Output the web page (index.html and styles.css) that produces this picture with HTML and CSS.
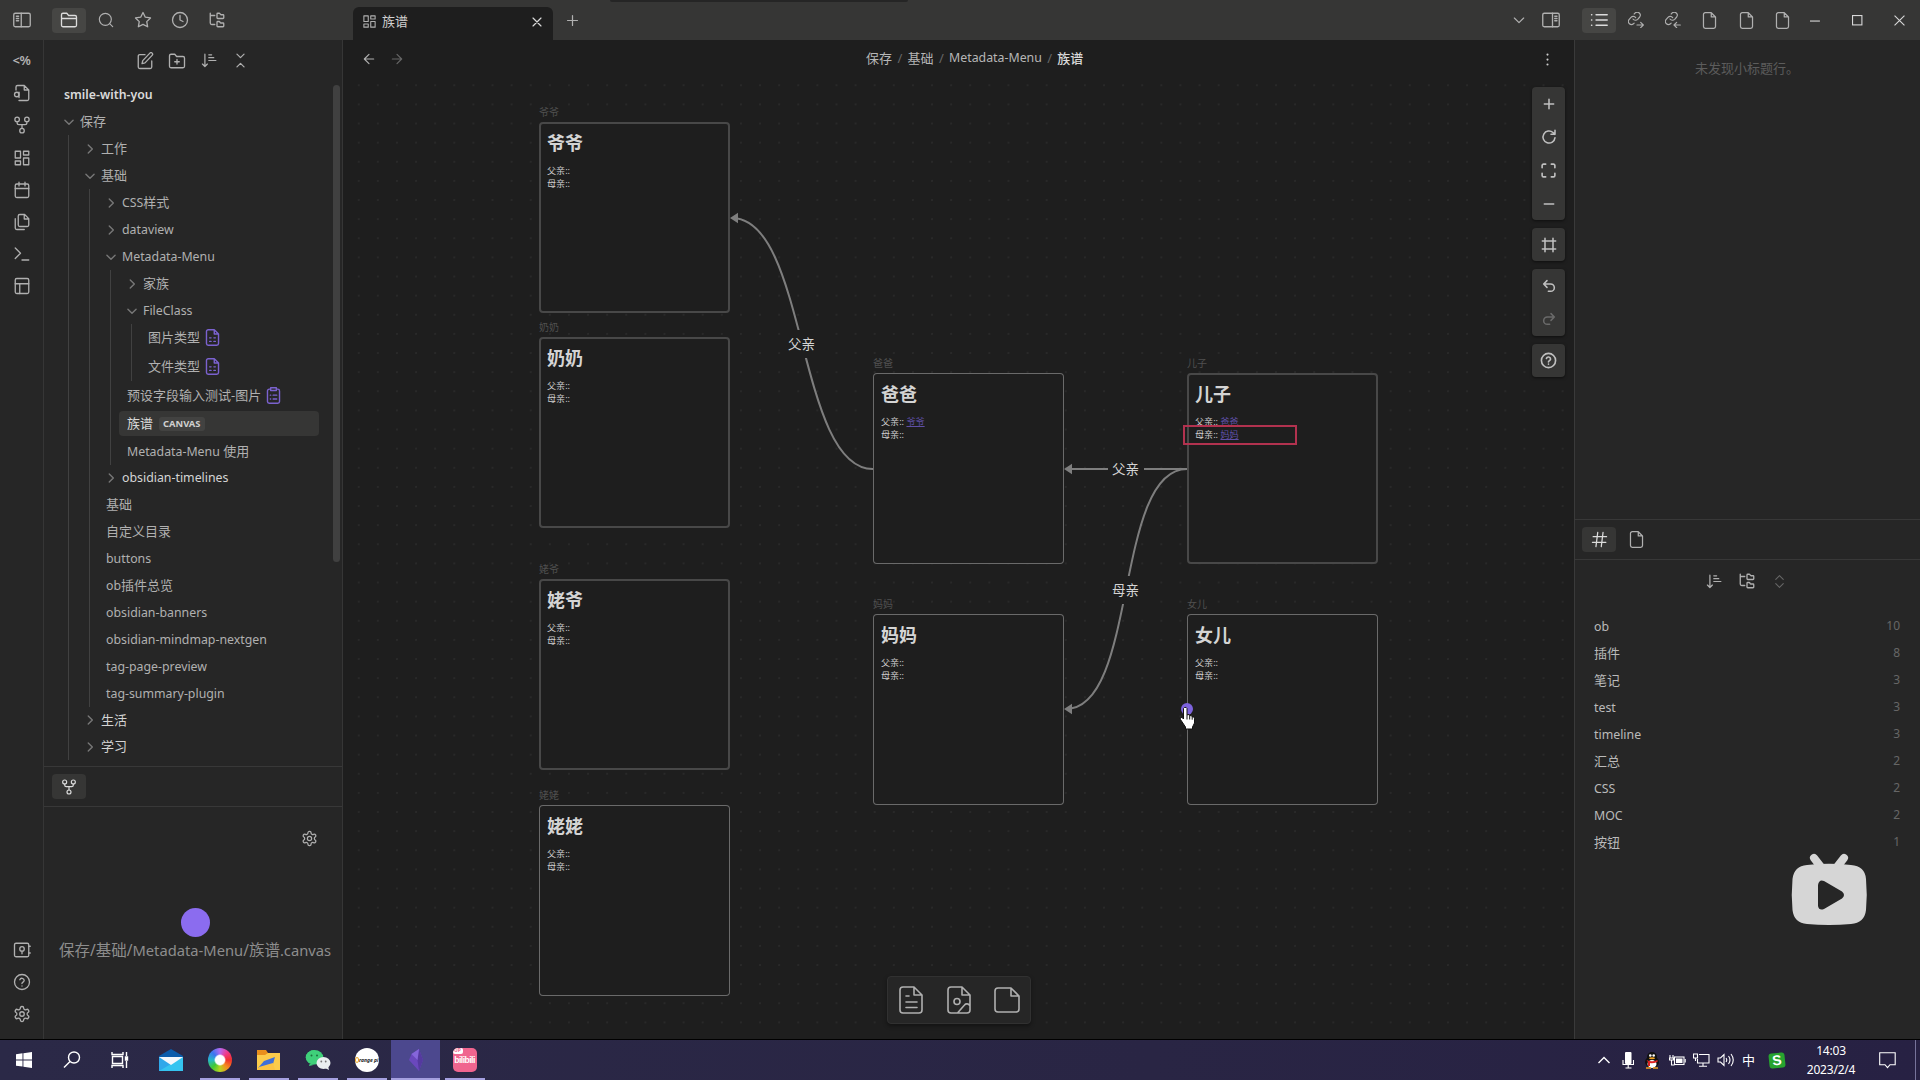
FILE: index.html
```html
<!DOCTYPE html>
<html lang="zh-CN">
<head>
<meta charset="utf-8">
<title>族谱</title>
<link rel="stylesheet" href="styles.css">
</head>
<body>
<svg class="defs" aria-hidden="true">
  <symbol id="i-folder" viewBox="0 0 24 24"><path d="M2 9V5a2 2 0 0 1 2-2h5l2.500 3H20a2 2 0 0 1 2 2v11a2 2 0 0 1-2 2H4a2 2 0 0 1-2-2V10h20"/></symbol>
  <symbol id="i-search" viewBox="0 0 24 24"><circle cx="11" cy="11" r="9"/><path d="M17.500 17.500L22 22"/></symbol>
  <symbol id="i-star" viewBox="0 0 24 24"><path d="M12 2l3.090 6.260L22 9.270l-5 4.870 1.180 6.880L12 17.770l-6.180 3.250L7 14.140 2 9.270l6.910-1.010z"/></symbol>
  <symbol id="i-clock" viewBox="0 0 24 24"><circle cx="12" cy="12" r="10"/><path d="M12 6v6l4 2"/></symbol>
  <symbol id="i-tree" viewBox="0 0 24 24"><path d="M13 10h7a1 1 0 0 0 1-1V6a1 1 0 0 0-1-1h-2.500a1 1 0 0 1-.8-.4l-.9-1.200A1 1 0 0 0 15 3h-2a1 1 0 0 0-1 1v5a1 1 0 0 0 1 1zM13 21h7a1 1 0 0 0 1-1v-3a1 1 0 0 0-1-1h-2.880a1 1 0 0 1-.9-.55l-.44-.9a1 1 0 0 0-.9-.55H13a1 1 0 0 0-1 1v5a1 1 0 0 0 1 1zM3 3v13a2 2 0 0 0 2 2h4M3 6h6"/></symbol>
  <symbol id="i-grid" viewBox="0 0 24 24"><path d="M3 3h7v9H3zM14 3h7v5h-7zM14 12h7v9h-7zM3 16h7v5H3z"/></symbol>
  <symbol id="i-x" viewBox="0 0 24 24"><path d="M18 6L6 18M6 6l12 12"/></symbol>
  <symbol id="i-plus" viewBox="0 0 24 24"><path d="M12 5v14M5 12h14"/></symbol>
  <symbol id="i-minus" viewBox="0 0 24 24"><path d="M5 12h14"/></symbol>
  <symbol id="i-left" viewBox="0 0 24 24"><path d="M19 12H5M12 19l-7-7 7-7"/></symbol>
  <symbol id="i-right" viewBox="0 0 24 24"><path d="M5 12h14M12 5l7 7-7 7"/></symbol>
  <symbol id="i-down" viewBox="0 0 24 24"><path d="M5 9l7 7 7-7"/></symbol>
  <symbol id="i-next" viewBox="0 0 24 24"><path d="M9 5l7 7-7 7"/></symbol>
  <symbol id="i-panel-l" viewBox="0 0 24 24"><rect x="1" y="3" width="22" height="18" rx="2"/><path d="M11 3v18M4.500 7h3M4.500 10h3M4.500 13h3"/></symbol>
  <symbol id="i-panel-r" viewBox="0 0 24 24"><rect x="1" y="3" width="22" height="18" rx="2"/><path d="M14 3v18M17 7h3M17 10h3M17 13h3"/></symbol>
  <symbol id="i-edit" viewBox="0 0 24 24"><path d="M12 3.500H5a2 2 0 0 0-2 2V20a2 2 0 0 0 2 2h14a2 2 0 0 0 2-2v-8M18.500 1.500a2.100 2.100 0 0 1 3 3L12 14.500l-4 1 1-4z"/></symbol>
  <symbol id="i-newfolder" viewBox="0 0 24 24"><path d="M4 21a2 2 0 0 1-2-2V5a2 2 0 0 1 2-2h5l2.500 3H20a2 2 0 0 1 2 2v11a2 2 0 0 1-2 2zM12 10v6M9 13h6"/></symbol>
  <symbol id="i-sort" viewBox="0 0 24 24"><path d="M2 17l3.500 3.500L9 17M5.500 20V3M11 4h4M11 8h7M11 12h10"/></symbol>
  <symbol id="i-collapse" viewBox="0 0 24 24"><path d="M7 21l5-5 5 5M7 3l5 5 5-5"/></symbol>
  <symbol id="i-updown" viewBox="0 0 24 24"><path d="M6 15.500l6 6 6-6M6 8.500l6-6 6 6"/></symbol>
  <symbol id="i-filesearch" viewBox="0 0 24 24"><path d="M4 8V4a2 2 0 0 1 2-2h9l6 6v12a2 2 0 0 1-2 2H8M15 2v6h6"/><circle cx="5" cy="14" r="3"/><path d="M8 11v7"/></symbol>
  <symbol id="i-fork" viewBox="0 0 24 24"><circle cx="12" cy="19.500" r="3"/><circle cx="5.500" cy="4.500" r="3"/><circle cx="18.500" cy="4.500" r="3"/><path d="M18.500 7.500v1.500a2.500 2.500 0 0 1-2.500 2.500H8A2.500 2.500 0 0 1 5.500 9V7.500M12 11.500v5"/></symbol>
  <symbol id="i-cal" viewBox="0 0 24 24"><rect x="3" y="4" width="18" height="18" rx="2"/><path d="M16 1.500v5M8 1.500v5M3 10h18"/></symbol>
  <symbol id="i-copy" viewBox="0 0 24 24"><path d="M15.500 2H9a2 2 0 0 0-2 2v12a2 2 0 0 0 2 2h10a2 2 0 0 0 2-2V7.500zM15 2v6h6M3 7.600V20a2 2 0 0 0 2 2h10"/></symbol>
  <symbol id="i-term" viewBox="0 0 24 24"><path d="M3 18l7-7-7-7M12 20h9"/></symbol>
  <symbol id="i-layout" viewBox="0 0 24 24"><rect x="3" y="2" width="18" height="20" rx="2"/><path d="M3 9h18M9 22V9"/></symbol>
  <symbol id="i-vault" viewBox="0 0 24 24"><rect x="2" y="3" width="19" height="18" rx="2"/><circle cx="12" cy="10.500" r="3"/><path d="M12 13.500V17M21 7h2M21 16h2"/></symbol>
  <symbol id="i-help" viewBox="0 0 24 24"><circle cx="12" cy="12" r="10"/><path d="M9.100 9a3 3 0 0 1 5.820 1c0 2-3 2.300-3 4M12 17.200v.1"/></symbol>
  <symbol id="i-gear" viewBox="0 0 24 24"><path d="M12.220 2h-.44a2 2 0 0 0-2 2v.18a2 2 0 0 1-1 1.730l-.43.25a2 2 0 0 1-2 0l-.15-.08a2 2 0 0 0-2.730.73l-.22.38a2 2 0 0 0 .73 2.730l.15.1a2 2 0 0 1 1 1.720v.51a2 2 0 0 1-1 1.740l-.15.09a2 2 0 0 0-.73 2.730l.22.38a2 2 0 0 0 2.730.73l.15-.08a2 2 0 0 1 2 0l.43.25a2 2 0 0 1 1 1.730V20a2 2 0 0 0 2 2h.44a2 2 0 0 0 2-2v-.18a2 2 0 0 1 1-1.730l.43-.25a2 2 0 0 1 2 0l.15.08a2 2 0 0 0 2.730-.73l.22-.39a2 2 0 0 0-.73-2.730l-.15-.08a2 2 0 0 1-1-1.740v-.5a2 2 0 0 1 1-1.740l.15-.09a2 2 0 0 0 .73-2.730l-.22-.38a2 2 0 0 0-2.730-.73l-.15.08a2 2 0 0 1-2 0l-.43-.25a2 2 0 0 1-1-1.730V4a2 2 0 0 0-2-2z"/><circle cx="12" cy="12" r="3"/></symbol>
  <symbol id="i-list" viewBox="0 0 24 24"><path d="M8 5h15M8 12h15M8 19h15M2 5h.5M2 12h.5M2 19h.5"/></symbol>
  <symbol id="i-link-out" viewBox="0 0 24 24"><path d="M7.500 10.500a4.600 4.600 0 0 0 7 .5l3-3.500a4.600 4.600 0 0 0-6.700-6.200L9.300 3M11.500 8.500a4.600 4.600 0 0 0-7-.5l-3 3.500a4.600 4.600 0 0 0 6.700 6.200l1-1M13.500 19.500h9M19 15.500l4 4-4 4"/></symbol>
  <symbol id="i-link-in" viewBox="0 0 24 24"><path d="M7.500 10.500a4.600 4.600 0 0 0 7 .5l3-3.500a4.600 4.600 0 0 0-6.700-6.200L9.300 3M11.500 8.500a4.600 4.600 0 0 0-7-.5l-3 3.500a4.600 4.600 0 0 0 6.700 6.200l1-1M14 19.500h9M17.500 15.500l-4 4 4 4"/></symbol>
  <symbol id="i-file" viewBox="0 0 24 24"><path d="M14.500 1H6a2.500 2.500 0 0 0-2.500 2.500v17A2.500 2.500 0 0 0 6 23h12a2.500 2.500 0 0 0 2.500-2.500V7zM14.500 1v6h6"/></symbol>
  <symbol id="i-filespread" viewBox="0 0 24 24"><path d="M14.500 1H6a2.500 2.500 0 0 0-2.500 2.500v17A2.500 2.500 0 0 0 6 23h12a2.500 2.500 0 0 0 2.500-2.500V7zM14.500 1v6h6M8 12.500h2M14 12.500h2M8 17.500h2M14 17.500h2"/></symbol>
  <symbol id="i-clip" viewBox="0 0 24 24"><path d="M8 3H6a2.500 2.500 0 0 0-2.500 2.500v15A2.500 2.500 0 0 0 6 23h12a2.500 2.500 0 0 0 2.500-2.500v-15A2.500 2.500 0 0 0 18 3h-2M8 1h8v4H8zM11.500 11.500h5M11.500 17h5M7.500 11.500h.5M7.500 17h.5"/></symbol>
  <symbol id="i-dots" viewBox="0 0 24 24"><path d="M12 5v.1M12 12v.1M12 19v.1"/></symbol>
  <symbol id="i-rotate" viewBox="0 0 24 24"><path d="M21 2v6h-6M21 13a9 9 0 1 1-3-7.700L21 8"/></symbol>
  <symbol id="i-max" viewBox="0 0 24 24"><path d="M8 3H5a2 2 0 0 0-2 2v3M21 8V5a2 2 0 0 0-2-2h-3M3 16v3a2 2 0 0 0 2 2h3M16 21h3a2 2 0 0 0 2-2v-3"/></symbol>
  <symbol id="i-frame" viewBox="0 0 24 24"><path d="M22 6H2M22 18H2M6 2v20M18 2v20"/></symbol>
  <symbol id="i-undo" viewBox="0 0 24 24"><path d="M9 14L4 9l5-5M4 9h10.500a5.500 5.500 0 0 1 0 11H11"/></symbol>
  <symbol id="i-redo" viewBox="0 0 24 24"><path d="M15 14l5-5-5-5M20 9H9.500a5.500 5.500 0 0 0 0 11H13"/></symbol>
  <symbol id="i-hash" viewBox="0 0 24 24"><path d="M3 8h19M2 16h19M9.500 2L7 22M17 2l-2.500 20"/></symbol>
  <symbol id="i-doc" viewBox="0 0 28 28"><path d="M17 1H6a3 3 0 0 0-3 3v20a3 3 0 0 0 3 3h16a3 3 0 0 0 3-3V9zM17 1v8h8M9 10h3M9 16h11M9 21.500h11"/></symbol>
  <symbol id="i-image" viewBox="0 0 28 28"><path d="M17 1H6a3 3 0 0 0-3 3v20a3 3 0 0 0 3 3h16a3 3 0 0 0 3-3V9zM17 1v8h8M12.500 27l7-8a3 3 0 0 1 5 .5"/><circle cx="12" cy="15.500" r="3"/></symbol>
  <symbol id="i-note" viewBox="0 0 28 28"><path d="M18 2H5a3 3 0 0 0-3 3v18a3 3 0 0 0 3 3h18a3 3 0 0 0 3-3V10zM18 2v8h8"/></symbol>
</svg>

<div class="app">
  <header class="titlebar">
    <div class="tb-left">
      <svg class="ic i18 tb-toggle"><use href="#i-panel-l"/></svg>
      <div class="tabs-mini">
        <span class="chip active"><svg class="ic i18"><use href="#i-folder"/></svg></span>
        <span class="chip"><svg class="ic i16"><use href="#i-search"/></svg></span>
        <span class="chip"><svg class="ic i18"><use href="#i-star"/></svg></span>
        <span class="chip"><svg class="ic i18"><use href="#i-clock"/></svg></span>
        <span class="chip"><svg class="ic i18"><use href="#i-tree"/></svg></span>
      </div>
    </div>
    <div class="tb-center">
      <div class="tab"><svg class="ic i15"><use href="#i-grid"/></svg><span class="tab-name">族谱</span><svg class="ic i16 bright"><use href="#i-x"/></svg></div>
      <svg class="ic i17 tab-add"><use href="#i-plus"/></svg>
      <svg class="ic i16 tab-menu"><use href="#i-down"/></svg>
      <svg class="ic i18 tab-panel"><use href="#i-panel-r"/></svg>
    </div>
    <div class="tb-right">
      <span class="chip active"><svg class="ic i18"><use href="#i-list"/></svg></span>
      <span class="chip"><svg class="ic i16"><use href="#i-link-out"/></svg></span>
      <span class="chip"><svg class="ic i16"><use href="#i-link-in"/></svg></span>
      <span class="chip"><svg class="ic i17"><use href="#i-file"/></svg></span>
      <span class="chip"><svg class="ic i17"><use href="#i-file"/></svg></span>
      <span class="chip"><svg class="ic i17"><use href="#i-file"/></svg></span>
      <div class="winbtns">
        <svg viewBox="0 0 10 10"><path d="M0 5.500h9"/></svg>
        <svg viewBox="0 0 10 10"><rect x=".5" y=".5" width="8.500" height="8.500"/></svg>
        <svg viewBox="0 0 10 10"><path d="M.5.5l9 9M9.500.5l-9 9"/></svg>
      </div>
    </div>
    <div class="top-shade"></div>
  </header>

  <div class="body">
    <nav class="ribbon">
      <span class="templ">&lt;%</span>
      <svg class="ic i18"><use href="#i-filesearch"/></svg>
      <svg class="ic i18"><use href="#i-fork"/></svg>
      <svg class="ic i18"><use href="#i-grid"/></svg>
      <svg class="ic i18"><use href="#i-cal"/></svg>
      <svg class="ic i18"><use href="#i-copy"/></svg>
      <svg class="ic i18"><use href="#i-term"/></svg>
      <svg class="ic i18"><use href="#i-layout"/></svg>
      <span class="grow"></span>
      <svg class="ic i18"><use href="#i-vault"/></svg>
      <svg class="ic i18"><use href="#i-help"/></svg>
      <svg class="ic i18"><use href="#i-gear"/></svg>
    </nav>

    <aside class="sidebar">
      <section class="explorer">
        <div class="actions">
          <svg class="ic i18"><use href="#i-edit"/></svg>
          <svg class="ic i18"><use href="#i-newfolder"/></svg>
          <svg class="ic i17"><use href="#i-sort"/></svg>
          <svg class="ic i17"><use href="#i-collapse"/></svg>
        </div>
        <div class="tree">
          <div class="row file vault en">smile-with-you</div>
          <div class="row"><svg class="chev"><use href="#i-down"/></svg>保存</div>
          <div class="kids">
            <div class="row"><svg class="chev"><use href="#i-next"/></svg>工作</div>
            <div class="row"><svg class="chev"><use href="#i-down"/></svg>基础</div>
            <div class="kids">
              <div class="row"><svg class="chev"><use href="#i-next"/></svg><span class="en">CSS</span>样式</div>
              <div class="row"><svg class="chev"><use href="#i-next"/></svg><span class="en">dataview</span></div>
              <div class="row"><svg class="chev"><use href="#i-down"/></svg><span class="en">Metadata-Menu</span></div>
              <div class="kids">
                <div class="row"><svg class="chev"><use href="#i-next"/></svg>家族</div>
                <div class="row"><svg class="chev"><use href="#i-down"/></svg><span class="en">FileClass</span></div>
                <div class="kids">
                  <div class="row file r27">图片类型<svg class="ic i17 tag-ic"><use href="#i-filespread"/></svg></div>
                  <div class="row file r30">文件类型<svg class="ic i17 tag-ic"><use href="#i-filespread"/></svg></div>
                </div>
                <div class="row file r28">预设字段输入测试-图片<svg class="ic i17 tag-ic"><use href="#i-clip"/></svg></div>
                <div class="row file r29"><div class="selected">族谱<span class="badge">CANVAS</span></div></div>
                <div class="row file"><span class="en">Metadata-Menu</span>&nbsp;使用</div>
              </div>
              <div class="row r26 lit"><svg class="chev"><use href="#i-next"/></svg><span class="en">obsidian-timelines</span></div>
              <div class="row file">基础</div>
              <div class="row file">自定义目录</div>
              <div class="row file"><span class="en">buttons</span></div>
              <div class="row file"><span class="en">ob</span>插件总览</div>
              <div class="row file"><span class="en">obsidian-banners</span></div>
              <div class="row file"><span class="en">obsidian-mindmap-nextgen</span></div>
              <div class="row file"><span class="en">tag-page-preview</span></div>
              <div class="row file"><span class="en">tag-summary-plugin</span></div>
            </div>
            <div class="row lit r26"><svg class="chev"><use href="#i-next"/></svg>生活</div>
            <div class="row lit"><svg class="chev"><use href="#i-next"/></svg>学习</div>
          </div>
        </div>
        <div class="scrollbar"></div>
      </section>
      <div class="pane-tabs"><span class="chip active"><svg class="ic i16"><use href="#i-fork"/></svg></span></div>
      <section class="graph">
        <svg class="ic i17 graph-gear"><use href="#i-gear"/></svg>
        <div class="graph-node"></div>
        <div class="graph-label">保存/基础/<span class="en">Metadata-Menu</span>/族谱<span class="en">.canvas</span></div>
      </section>
    </aside>

    <main class="main">
      <div class="view-head">
        <svg class="ic i16"><use href="#i-left"/></svg>
        <svg class="ic i16 dim"><use href="#i-right"/></svg>
        <div class="crumbs"><span>保存</span><i>/</i><span>基础</span><i>/</i><span class="en">Metadata-Menu</span><i>/</i><b>族谱</b></div>
        <svg class="ic i17 more"><use href="#i-dots"/></svg>
      </div>
      <div class="canvas">
        <div class="dots"></div>
        <svg class="edges" viewBox="343 78 1230 961">
          <path d="M873 469C797 469 807 218 732 218"/>
          <path d="M1187 469H1070"/>
          <path d="M1187 469C1114 469 1138 709 1066 709"/>
          <g class="heads"><path d="M730 218l8-5.300v10.600zM1064 469l8-5.300v10.600zM1064 709l8-5.300v10.600z"/></g>
        </svg>
        <span class="edge-label e1">父亲</span>
        <span class="edge-label e2">父亲</span>
        <span class="edge-label e3">母亲</span>

        <article class="node soft n1"><label>爷爷</label><h2>爷爷</h2><p>父亲::</p><p>母亲::</p></article>
        <article class="node soft n2"><label>奶奶</label><h2>奶奶</h2><p>父亲::</p><p>母亲::</p></article>
        <article class="node soft n3"><label>姥爷</label><h2>姥爷</h2><p>父亲::</p><p>母亲::</p></article>
        <article class="node n4"><label>姥姥</label><h2>姥姥</h2><p>父亲::</p><p>母亲::</p></article>
        <article class="node n5"><label>爸爸</label><h2>爸爸</h2><p>父亲:: <a>爷爷</a></p><p>母亲::</p></article>
        <article class="node n6"><label>妈妈</label><h2>妈妈</h2><p>父亲::</p><p>母亲::</p></article>
        <article class="node soft n7"><label>儿子</label><h2>儿子</h2><p>父亲:: <a>爸爸</a></p><p>母亲:: <a>妈妈</a></p></article>
        <article class="node n8"><label>女儿</label><h2>女儿</h2><p>父亲::</p><p>母亲::</p></article>

        <div class="redbox"></div>
        <div class="handle"></div>
        <svg class="cursor" viewBox="0 0 17 24"><path d="M5.500 1.500Q7.500.8 8 2.500V9l1-.5q1.500 0 1.700 1.200 2-.6 2.300 1 2.200-.4 2.500 1.500V17l-2 4v2H6.500v-2L1.500 13.500Q.5 11.500 2 11.200q1.200 0 2.500 1.800V2.500z"/><path class="fingers" d="M8 9v4.500M10.700 9.700v3.800M13.200 10.700v3"/></svg>

        <div class="controls">
          <div class="cgroup">
            <span><svg class="ic i16"><use href="#i-plus"/></svg></span>
            <span><svg class="ic i16"><use href="#i-rotate"/></svg></span>
            <span><svg class="ic i17"><use href="#i-max"/></svg></span>
            <span><svg class="ic i16"><use href="#i-minus"/></svg></span>
          </div>
          <div class="cgroup"><span><svg class="ic i16"><use href="#i-frame"/></svg></span></div>
          <div class="cgroup">
            <span><svg class="ic i16"><use href="#i-undo"/></svg></span>
            <span><svg class="ic i16 dim"><use href="#i-redo"/></svg></span>
          </div>
          <div class="cgroup"><span><svg class="ic i17"><use href="#i-help"/></svg></span></div>
        </div>

        <div class="cardmenu">
          <svg class="ic i28"><use href="#i-doc"/></svg>
          <svg class="ic i28"><use href="#i-image"/></svg>
          <svg class="ic i28"><use href="#i-note"/></svg>
        </div>
      </div>
    </main>

    <aside class="rightbar">
      <section class="outline">未发现小标题行。</section>
      <div class="pane-tabs">
        <span class="chip active"><svg class="ic i17"><use href="#i-hash"/></svg></span>
        <span class="chip"><svg class="ic i17"><use href="#i-file"/></svg></span>
      </div>
      <section class="tags">
        <div class="tag-actions">
          <svg class="ic i17"><use href="#i-sort"/></svg>
          <svg class="ic i18"><use href="#i-tree"/></svg>
          <svg class="ic i15 dim"><use href="#i-updown"/></svg>
        </div>
        <ul>
          <li><span class="en">ob</span><em>10</em></li>
          <li>插件<em>8</em></li>
          <li>笔记<em>3</em></li>
          <li><span class="en">test</span><em>3</em></li>
          <li><span class="en">timeline</span><em>3</em></li>
          <li>汇总<em>2</em></li>
          <li><span class="en">CSS</span><em>2</em></li>
          <li><span class="en">MOC</span><em>2</em></li>
          <li>按钮<em>1</em></li>
        </ul>
      </section>
      <svg class="bili" viewBox="0 0 76 72"><path d="M23 5l7 9M53 5l-7 9" class="ant"/><path fill-rule="evenodd" d="M16 12Q38 9.500 60 12 74 13 75 26 76.500 42 75 57 73.500 70 60 71 38 73 16 71 3 70 1.500 57 0 42 1.500 26 3 13 16 12zM27 32V53Q28 58 33 56L51 45.500Q55 42 51 38.500L33 28Q28 26 27 32z"/></svg>
    </aside>
  </div>

  <footer class="taskbar">
    <div class="tk"><svg width="16" height="16" viewBox="0 0 16 16" fill="#fff"><path d="M0 2.200L6.500 1.300v6.200H0zM7.400 1.200L16 0v7.500H7.400zM0 8.400h6.500v6.200L0 13.700zM7.400 8.400H16V16l-8.600-1.200z"/></svg></div>
    <div class="tk"><svg width="18" height="18" viewBox="0 0 18 18" class="wl"><circle cx="11" cy="6.500" r="5.500"/><path d="M7 10.500L1 16.500"/></svg></div>
    <div class="tk"><svg width="18" height="18" viewBox="0 0 18 18" class="wl"><path d="M1 1v2.500h11V1M1 17v-2.500h11V17M1.500 5.500h10v7h-10zM15.500 1v4M15.500 10v7"/><path d="M14.500 6h2v3h-2z" fill="#fff"/></svg></div>
    <div class="tk"><svg width="26" height="24" viewBox="0 0 26 24"><path d="M1 8L13 1l12 7v4H1z" fill="#0b5cab"/><path d="M1 9h24v14H1z" fill="#2fa8ea"/><path d="M1 23L25 9v14z" fill="#35c4f0"/><path d="M1 9h24l-12 8z" fill="#f4f8fc"/></svg></div>
    <div class="tk run"><span class="wheel"></span></div>
    <div class="tk run"><svg width="25" height="24" viewBox="0 0 25 24"><path d="M1 2h9l2 3h12v6H1z" fill="#e98f1c"/><path d="M1 7h8l3-2h12v17H1z" fill="#fccb4b"/><path d="M2 20l6-7 11-4-2 7z" fill="#3f6fd8"/><path d="M1 22l2-3 14-4 2 7z" fill="#fcc344"/></svg></div>
    <div class="tk run"><svg width="26" height="22" viewBox="0 0 26 22"><path d="M9.500 1a8.500 7.300 0 1 0 0 14.700L4 17l1-3" fill="#3fd07a"/><ellipse cx="9.500" cy="8.300" rx="8.800" ry="7.300" fill="#3fd07a"/><circle cx="6.500" cy="6.500" r="1" fill="#1f6e3e"/><circle cx="12" cy="6.500" r="1" fill="#1f6e3e"/><ellipse cx="18.500" cy="14" rx="7" ry="6" fill="#e9eef0"/><path d="M20 19l4 2-1-4z" fill="#e9eef0"/><circle cx="16.300" cy="12.500" r=".9" fill="#777"/><circle cx="20.700" cy="12.500" r=".9" fill="#777"/></svg></div>
    <div class="tk run"><span class="orange"><i></i>range pi</span></div>
    <div class="tk run cur"><svg width="16" height="24" viewBox="0 0 16 24"><path d="M11 1L3.500 6 1 12l10 11 4-11z" fill="#6a48bd"/><path d="M11 1l-1.500 11L11 23l4-11z" fill="#553a9f"/><path d="M11 1L3.500 6l6 6z" fill="#8566da"/></svg></div>
    <div class="tk run"><span class="bl"><small>UP</small><b>bilibili</b></span></div>
    <div class="tray">
      <svg class="wl t1" viewBox="0 0 12 8"><path d="M.5 7L6 1.500 11.500 7"/></svg>
      <svg class="t2" viewBox="0 0 12 17"><rect x="3" y="0" width="6.500" height="12" rx="1" fill="#fff"/><path class="wh" d="M1 8v4.500h10.500V8M6.200 12v4M3.500 16h6"/></svg>
      <svg class="t3" viewBox="0 0 16 17"><ellipse cx="8" cy="10" rx="7" ry="6" fill="#111"/><ellipse cx="8" cy="5" rx="5" ry="5" fill="#111"/><ellipse cx="8" cy="12" rx="4.500" ry="4" fill="#fff"/><circle cx="6.300" cy="3.500" r="1.300" fill="#fff"/><circle cx="9.700" cy="3.500" r="1.300" fill="#fff"/><ellipse cx="8" cy="6.200" rx="3" ry="1" fill="#f0a020"/><path d="M2.500 8Q8 10.500 13.500 8v2Q8 12 6 11v3H4v-4z" fill="#d22"/><path d="M2 16h5M9 16h5" stroke="#f0a020" stroke-width="1.500"/></svg>
      <svg class="t4" viewBox="0 0 17 12"><rect x="5.500" y="3" width="9.500" height="7.500" class="wh"/><rect x="7" y="4.500" width="6.500" height="4.500" fill="#fff"/><path class="wh" d="M16.200 5v3.500M1 1v3M4 1v3M.5 4h4v2h-4zM2.500 6v5h3"/></svg>
      <svg class="t5" viewBox="0 0 17 14"><path class="wh" d="M6 1.500h10v8.500H4.500V6M10 10v3M6 13.200h8M.5 1h4v4h-4zM2.500 5v3"/></svg>
      <svg class="t6" viewBox="0 0 17 14"><path class="wh" d="M1 5h2.500L7 1.500v11L3.500 9H1zM9 5q1.500 2 0 4M11.500 3q3 4 0 8M14 1q4.500 6 0 12"/></svg>
      <span class="ime">中</span>
      <span class="sogou">S</span>
      <div class="clock"><span>14:03</span><span>2023/2/4</span></div>
      <svg class="t7" viewBox="0 0 17 17"><path class="wh" d="M.7.700h15.500v12H11l-2.500 3-2.500-3H.7z"/></svg>
      <span class="peek"></span>
    </div>
  </footer>
</div>
</body>
</html>
```
FILE: styles.css
```css
* { box-sizing: border-box; margin: 0; padding: 0; }
body {
  width: 1920px; height: 1080px; overflow: hidden;
  background: #1e1e1e; color: #b6b6b6;
  font: 13px/1.4 "Noto Sans", "Noto Sans CJK SC", sans-serif;
}
.defs { display: none; }
.app { display: flex; flex-direction: column; width: 1920px; height: 1080px; }
.en { font-size: .95em; }
.ic { flex: none; fill: none; stroke: #b0b0b0; stroke-width: 1.75; stroke-linecap: round; stroke-linejoin: round; }
.i15 { width: 15px; height: 15px; }
.i16 { width: 16px; height: 16px; }
.i17 { width: 17px; height: 17px; }
.i18 { width: 18px; height: 18px; }
.i28 { width: 28px; height: 28px; stroke-width: 1.6; }
.ic.dim { stroke: #666; }
.ic.bright { stroke: #dadada; }
.grow { flex: 1; }
.chip { display: flex; align-items: center; justify-content: center; width: 34px; height: 25px; border-radius: 4px; flex: none; }
.chip.active { background: #464644; }
.chip.active .ic { stroke: #dcdcdc; }

/* title bar */
.titlebar { position: relative; display: flex; height: 40px; flex: none; background: #363635; }
.tb-left { display: flex; align-items: center; width: 353px; padding-left: 13px; }
.tb-toggle { margin-right: 21px; }
.tabs-mini { display: flex; gap: 3px; }
.tb-center { display: flex; align-items: center; width: 1221px; }
.tab { display: flex; align-items: center; align-self: flex-end; width: 200px; height: 33px; padding: 0 8px 4px 9px; background: #1e1e1e; border-radius: 6px 6px 0 0; color: #d0d0d0; }
.tab-name { flex: 1; margin-left: 5px; }
.tab-add { margin-left: 10.500px; }
.tab-menu { margin-left: auto; margin-right: 15px; }
.tab-panel { margin-right: 14px; }
.tb-right { display: flex; align-items: center; flex: 1; padding-left: 8px; gap: 2.800px; }
.winbtns { display: flex; gap: 31px; margin-left: 7px; }
.winbtns svg { width: 11px; height: 11px; fill: none; stroke: #d8d8d8; overflow: visible; }
.top-shade { position: absolute; left: 610px; top: 0; width: 298px; height: 2px; background: #252525; border-radius: 0 0 4px 4px; }

.body { display: flex; height: 999px; flex: none; }

/* ribbon */
.ribbon { display: flex; flex-direction: column; align-items: center; width: 44px; padding: 12px 0 16px; gap: 14.200px; background: #262626; border-right: 1px solid #363636; }
.ribbon svg { flex: none; }
.templ { height: 18px; line-height: 17px; font-size: 13px; font-weight: 600; letter-spacing: -.5px; color: #b3b3b3; }

/* left sidebar */
.sidebar { display: flex; flex-direction: column; width: 299px; background: #262626; border-right: 1px solid #363636; }
.explorer { position: relative; height: 726px; }
.actions { display: flex; align-items: center; justify-content: center; gap: 14.500px; height: 41px; margin-left: -1px; }
.tree { padding-left: 4px; }
.row { display: flex; align-items: center; height: 27px; padding-left: 14px; white-space: nowrap; color: #b0b0b0; }
.row.file { padding-left: 16px; }
.row.vault { color: #dadada; font-weight: 600; font-size: 12.300px; }
.row.lit { color: #d4d4d4; }
.row.r27 { height: 27px; }
.row.r30 { height: 30px; }
.row.r29 { height: 29px; }
.row.r28 { height: 28px; }
.row.r26 { height: 26px; }
.chev { flex: none; width: 14px; height: 14px; margin-right: 4px; fill: none; stroke: #777; stroke-width: 2.400; stroke-linecap: round; stroke-linejoin: round; }
.kids { margin-left: 20px; border-left: 1px solid #414141; }
.tag-ic { margin-left: 4px; stroke: #7b62cf; stroke-width: 2; }
.selected { display: flex; align-items: center; width: 200px; height: 25px; margin-left: -8px; padding-left: 8px; border-radius: 4px; background: #363635; color: #dadada; }
.badge { margin-left: 6px; padding: 0 4px; line-height: 14px; font-size: 9.400px; font-weight: 700; border-radius: 3px; background: #424241; color: #d0d0d0; }
.scrollbar { position: absolute; right: 2px; top: 45px; width: 7px; height: 477px; border-radius: 4px; background: #404040; }
.pane-tabs { display: flex; align-items: center; gap: 3px; height: 41px; flex: none; padding-left: 8px; border-top: 1px solid #383838; border-bottom: 1px solid #383838; }
.pane-tabs .chip.active { background: #363635; }
.graph { display: flex; flex-direction: column; align-items: center; flex: 1; }
.graph-gear { align-self: flex-end; margin: 23px 24px 0 0; }
.graph-node { width: 29px; height: 29px; margin: 61px 0 0 4px; border-radius: 50%; background: #8b6cef; }
.graph-label { margin-top: 3px; margin-left: 4px; font-size: 15.500px; color: #8d8d8d; white-space: nowrap; }

/* canvas view */
.main { display: flex; flex-direction: column; width: 1231px; background: #1e1e1e; }
.view-head { position: relative; display: flex; align-items: center; gap: 12px; height: 38px; padding: 0 18px 0 18px; }
.more { margin-left: auto; stroke-width: 3; stroke: #ccc; }
.crumbs { position: absolute; left: 523px; top: 8px; display: flex; align-items: center; gap: 5.500px; line-height: 20px; }
.crumbs i { width: 4.500px; text-align: center; color: #666; font-style: normal; }
.crumbs b { font-weight: 500; color: #dadada; }
.canvas { position: relative; flex: 1; overflow: hidden; }
.dots { position: absolute; inset: 0; background-image: radial-gradient(circle, #2c2c2c .6px, transparent 1px); background-size: 19.120px 19.130px; background-position: 6.200px -2.300px; }
.edges { position: absolute; left: 0; top: 0; width: 1230px; height: 961px; fill: none; stroke: #7e7e7e; stroke-width: 2; }
.heads { fill: #7e7e7e; stroke: none; }
.edge-label { position: absolute; width: 36px; height: 28px; line-height: 28px; text-align: center; font-size: 13.500px; background: #1e1e1e; color: #d4d4d4; }
.e1 { left: 440.500px; top: 252px; }
.e2 { left: 764.500px; top: 377px; }
.e3 { left: 764.500px; top: 498px; }
.node { position: absolute; width: 191px; height: 191px; padding: 9px 8px; border-radius: 4px; background: #1e1e1e; box-shadow: inset 0 0 0 1px #6a6a6a; }
.node.soft { box-shadow: inset 0 0 0 2px #484848; }
.node label { position: absolute; left: 0; top: -18px; font-size: 10px; line-height: 16px; color: #505050; }
.node h2 { height: 25px; line-height: 25px; margin-bottom: 7.500px; font-size: 18px; font-weight: 700; color: #d4d4d4; }
.node p { height: 13.200px; line-height: 13.200px; font-size: 9.100px; color: #d0d0d0; }
.node a { color: #5f4fa5; text-decoration: underline; }
.n1 { left: 196px; top: 44px; }
.n2 { left: 196px; top: 259px; }
.n3 { left: 196px; top: 501px; }
.n4 { left: 196px; top: 727px; }
.n5 { left: 530px; top: 295px; }
.n6 { left: 530px; top: 536px; }
.n7 { left: 844px; top: 295px; }
.n8 { left: 844px; top: 536px; }
.redbox { position: absolute; left: 840px; top: 347px; width: 114px; height: 20px; border: 2px solid #b2324f; }
.handle { position: absolute; left: 838px; top: 625px; width: 12px; height: 12px; border-radius: 50%; background: #7d63dd; }
.cursor { position: absolute; left: 836px; top: 628px; width: 17px; height: 24px; fill: #fff; stroke: #111; stroke-width: 1; }
.fingers { fill: none; }
.controls { position: absolute; right: 9px; top: 9px; display: flex; flex-direction: column; gap: 8px; }
.cgroup { display: flex; flex-direction: column; border-radius: 4px; background: #363635; box-shadow: 0 1px 3px #0008; }
.cgroup span { display: flex; align-items: center; justify-content: center; width: 33px; height: 33.300px; }
.cgroup .ic { stroke: #c0c0c0; stroke-width: 2.300; }
.cgroup .ic.dim { stroke: #6a6a6a; }
.cardmenu { position: absolute; left: 544px; top: 898px; display: flex; align-items: center; justify-content: center; gap: 20px; width: 144px; height: 48px; border: 1px solid #313131; border-radius: 4px; background: #262626; box-shadow: 0 2px 4px #0006; }

/* right sidebar */
.rightbar { position: relative; display: flex; flex-direction: column; flex: 1; background: #262626; border-left: 1px solid #3a3a3a; }
.outline { height: 479px; padding: 19px 1px 0 0; text-align: center; color: #5c5c5c; }
.rightbar .pane-tabs { padding-left: 7px; }
.tag-actions { display: flex; align-items: center; justify-content: center; gap: 15.500px; height: 42px; padding-right: 3px; }
.tags ul { list-style: none; padding: 11px 20px 0 19px; }
.tags li { display: flex; align-items: center; justify-content: space-between; height: 27px; color: #bababa; }
.tags em { font-style: normal; font-size: 12px; color: #666; }
.bili { position: absolute; left: 216px; top: 813px; width: 76px; height: 72px; fill: #d6d6d6; overflow: visible; }
.ant { stroke: #d6d6d6; stroke-width: 8; stroke-linecap: round; }

/* taskbar */
.taskbar { display: flex; height: 41px; border-top: 1px solid #000; background: linear-gradient(90deg, #2b2947, #292544 60%, #272143); }
.tk { position: relative; display: flex; align-items: center; justify-content: center; width: 49px; height: 40px; }
.tk:nth-child(1), .tk:nth-child(2), .tk:nth-child(3) { width: 48px; }
.tk:nth-child(4) { width: 54px; margin-right: -3px; }
.tk.run::after { content: ""; position: absolute; left: 5px; right: 4px; bottom: 0; height: 2px; background: #a5a0e0; }
.tk.cur { background: #4c488e; }
.tk.cur::after { left: 0; right: 0; }
.wl, .wh { fill: none; stroke: #fff; stroke-width: 1.400; }
.wheel { width: 24px; height: 24px; border-radius: 50%; background: radial-gradient(circle, #fff 0 4.500px, transparent 6px), conic-gradient(#b36af0, #f13a8a, #f0312d, #f58a1d, #b8d421, #41c932, #27b7c9, #3c75f0, #b36af0); }
.orange { display: flex; align-items: center; justify-content: center; width: 24px; height: 24px; border-radius: 50%; background: #fff; color: #222; font-size: 5px; font-weight: 700; font-style: italic; white-space: nowrap; }
.orange i { width: 6px; height: 6px; border: 1.500px solid #e8a01c; border-radius: 50%; }
.bl { display: flex; flex-direction: column; width: 24px; height: 24px; overflow: hidden; border-radius: 5px; background: #f0658f; color: #fff; line-height: 1; }
.bl small { width: 10px; height: 6px; border-radius: 2px; background: #fff; color: #f0658f; font-size: 5px; font-weight: 700; text-align: center; }
.bl b { font: 700 8.500px/11px "Liberation Sans", sans-serif; letter-spacing: -.5px; text-align: center; margin-top: 1px; }
.tray { display: flex; align-items: center; flex: 1; justify-content: flex-end; color: #fff; }
.t1 { width: 12px; height: 8px; margin-right: 12px; }
.t2 { width: 12px; height: 17px; margin-right: 10px; }
.t3 { width: 16px; height: 17px; margin-right: 9px; }
.t4 { width: 17px; height: 12px; margin-right: 7px; }
.t5 { width: 17px; height: 14px; margin-right: 7px; }
.t6 { width: 17px; height: 14px; margin-right: 8px; }
.wh { stroke-width: 1.100; }
.ime { margin-right: 14px; font-size: 13px; line-height: 20px; }
.sogou { width: 16px; height: 15px; margin-right: 20px; border-radius: 3px; background: #27a32f; font: 700 14px/15px "Liberation Sans", sans-serif; text-align: center; transform: rotate(-6deg); }
.clock { display: flex; flex-direction: column; align-items: center; width: 52px; margin-right: 1px; font-size: 12px; line-height: 19px; letter-spacing: -.2px; white-space: nowrap; padding-bottom: 1px; }
.t7 { width: 17px; height: 17px; margin: 0 19px 0 21px; }
.peek { width: 5px; height: 40px; border-left: 1px solid #77739a; }
```
